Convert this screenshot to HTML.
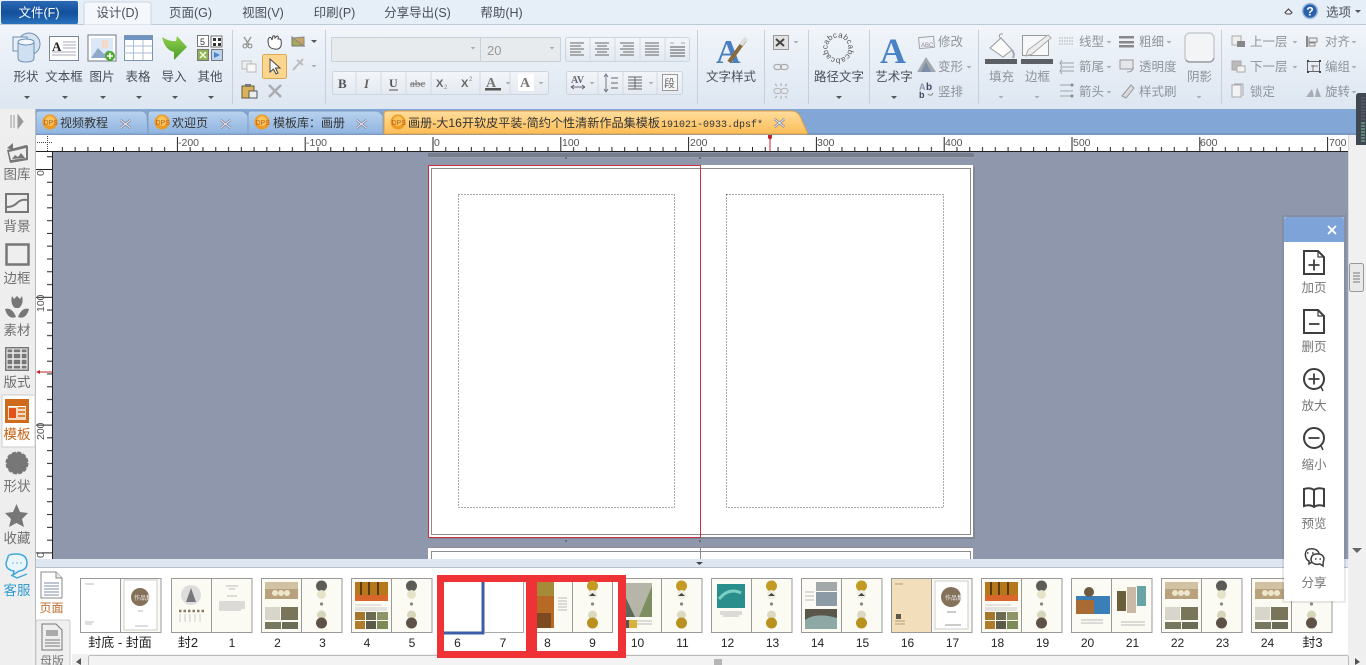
<!DOCTYPE html>
<html><head><meta charset="utf-8"><style>
html,body{margin:0;padding:0;width:1366px;height:665px;overflow:hidden;background:#eee}
svg{display:block;font-family:"Liberation Sans","Noto Sans CJK SC",sans-serif;filter:blur(.3px)}
text{font-size:12.5px;fill:#4a4f58}
.g text,text.g{fill:#8f949b}
.r{font-size:10.5px;fill:#555}
.s text{font-size:13.5px;fill:#707070;text-anchor:middle}
.p text{font-size:12.5px;fill:#777;text-anchor:middle}
.n text{font-size:12px;fill:#222;text-anchor:middle}
.m text{text-anchor:middle}
.tb{font-size:12px;fill:#333}
</style></head><body>
<svg width="1366" height="665" viewBox="0 0 1366 665" xmlns="http://www.w3.org/2000/svg">
<defs>
<linearGradient id="rib" x1="0" y1="0" x2="0" y2="1"><stop offset="0" stop-color="#f1f5fa"/><stop offset="1" stop-color="#dde6f1"/></linearGradient>
<linearGradient id="file" x1="0" y1="0" x2="0" y2="1"><stop offset="0" stop-color="#2c6ab4"/><stop offset=".5" stop-color="#134f9b"/><stop offset="1" stop-color="#2a72bd"/></linearGradient>
<linearGradient id="tabb" x1="0" y1="0" x2="0" y2="1"><stop offset="0" stop-color="#b8d2ee"/><stop offset="1" stop-color="#8fb4e0"/></linearGradient>
<linearGradient id="tabo" x1="0" y1="0" x2="0" y2="1"><stop offset="0" stop-color="#ffdd9c"/><stop offset="1" stop-color="#fbbd57"/></linearGradient>
<linearGradient id="btn" x1="0" y1="0" x2="0" y2="1"><stop offset="0" stop-color="#f3f6fa"/><stop offset="1" stop-color="#e3e9f0"/></linearGradient>
<linearGradient id="grn" x1="0" y1="0" x2="0" y2="1"><stop offset="0" stop-color="#8fd04e"/><stop offset="1" stop-color="#4a9a26"/></linearGradient>
<pattern id="hr" x="432.5" y="137" width="127.8" height="15" patternUnits="userSpaceOnUse">
<path d="M.5 0V15M13.28 10V15M26.06 10V15M38.84 10V15M51.62 10V15M64.4 10V15M77.18 10V15M89.96 10V15M102.74 10V15M115.52 10V15" stroke="#222" fill="none"/>
</pattern>
<pattern id="vr" x="36" y="169" width="16" height="127.8" patternUnits="userSpaceOnUse">
<path d="M0 .5H16M11 13.28H16M11 26.06H16M11 38.84H16M11 51.62H16M11 64.4H16M11 77.18H16M11 89.96H16M11 102.74H16M11 115.52H16" stroke="#222" fill="none"/>
</pattern>
<path id="circ" d="M838 37.500A10.500 10.500 0 1 1 837.900 37.500"/>
<g id="dps"><circle cx="0" cy="0" r="7.5" fill="#ef9a22"/><circle cx="0" cy="-1" r="5" fill="#f9c35e"/><text x="-6.5" y="3" style="font-size:7px;fill:#b5651d">DPS</text></g>
<g id="x"><path d="M-5 -4L5 4M-5 4L5 -4" stroke="#778" stroke-width="2.4"/><path d="M-5 -4L5 4M-5 4L5 -4" stroke="#eef" stroke-width="1"/></g>
<path id="ar" d="M-3 0H3L0 3Z" fill="#555"/>
<path id="arg" d="M-2.5 0H2.5L0 2.5Z" fill="#a9aeb5"/>
<g id="frame"><rect x=".5" y=".5" width="80.500" height="54" fill="#fbfaf3" stroke="#999"/><path d="M40.5 0V54" stroke="#999"/></g>
<g id="rd"><circle cx="60.5" cy="8" r="5.500" fill="#5c5c56"/><circle cx="60.5" cy="16.500" r="4.500" fill="#e5e3c8"/><circle cx="60.5" cy="26" r="1.6" fill="#888"/><circle cx="60.5" cy="37" r="4.500" fill="#d8d6b8"/><circle cx="60.5" cy="45" r="5.500" fill="#5d5148"/></g>
<g id="rg"><circle cx="60.5" cy="8" r="5.500" fill="#c39a24"/><circle cx="60.5" cy="16.500" r="4.500" fill="#efece0"/><path d="M57 18l3.500-3 3.500 3z" fill="#444"/><circle cx="60.5" cy="26" r="1.600" fill="#888"/><circle cx="60.5" cy="37" r="4.500" fill="#ddd9c0"/><circle cx="60.5" cy="45" r="5.500" fill="#b8911f"/></g>
<g id="lhouse"><rect x="4" y="4" width="33" height="17" fill="#b7a27d"/><rect x="4" y="4" width="33" height="7" fill="#d2c2a4"/><circle cx="14" cy="15" r="3" fill="#eee6cc"/><circle cx="20" cy="15" r="3" fill="#eee6cc"/><circle cx="26" cy="15" r="3" fill="#eee6cc"/><rect x="4" y="29" width="15" height="13" fill="#d8d6ca"/><rect x="20" y="29" width="17" height="13" fill="#79755b"/><rect x="4" y="44" width="16" height="7" fill="#77785f"/><rect x="21" y="44" width="16" height="7" fill="#6b6c55"/></g>
<g id="lorange"><rect x="4" y="4" width="33" height="19" fill="#b5781c"/><rect x="4" y="17" width="33" height="6" fill="#d9662a"/><path d="M10 4V17M18 4V17M27 4V17" stroke="#5c3a10" stroke-width="2"/><path d="M4 27H30M4 30H36M4 32H36" stroke="#ccc"/><rect x="4" y="34" width="10" height="8" fill="#a5772c"/><rect x="15" y="34" width="10" height="8" fill="#6c6a50"/><rect x="26" y="34" width="11" height="8" fill="#8d9468"/><rect x="4" y="43" width="10" height="8" fill="#b07c2a"/><rect x="15" y="43" width="10" height="8" fill="#5c5a48"/><rect x="26" y="43" width="11" height="8" fill="#7c8a58"/></g>
</defs>

<!-- base -->
<rect width="1366" height="665" fill="#efefef"/>
<rect width="1366" height="25" fill="#e6eef7"/>
<rect y="24" width="1366" height="1" fill="#bcc8d6"/>
<rect x="1" y="1" width="77" height="23" rx="2" fill="url(#file)"/>
<path d="M84 25V5Q84 2 87 2H148Q151 2 151 5V25Z" fill="#f4f7fb" stroke="#cdd6e0"/>
<g class="m">
<text x="39" y="17" style="fill:#fff;text-anchor:middle">文件(F)</text>
<text x="117.500" y="17">设计(D)</text>
<text x="190.500" y="17">页面(G)</text>
<text x="263" y="17">视图(V)</text>
<text x="334.500" y="17">印刷(P)</text>
<text x="417.500" y="17">分享导出(S)</text>
<text x="501.500" y="17">帮助(H)</text>
</g>
<path d="M1285 12.500l3.500-3.500 3.500 3.500-1.500 1.500h-4z" fill="none" stroke="#444" stroke-width="1.100"/>
<circle cx="1310" cy="11" r="7.500" fill="#2b62ad" stroke="#a8c0dc" stroke-width="1.500"/>
<text x="1310" y="15.500" style="fill:#fff;font-size:12px;font-weight:700;text-anchor:middle">?</text>
<text x="1326" y="16.500">选项</text><use href="#ar" x="1358" y="10"/>

<!-- ribbon -->
<rect y="25" width="1366" height="84" fill="url(#rib)"/>
<path d="M232.500 30V104M325.500 30V104M697.500 30V104M764.500 30V104M808.500 30V104M869.500 30V104M978.500 30V104M1221.500 30V104" stroke="#c6d0dc"/>

<g class="m">
<text x="26" y="81">形状</text><text x="64" y="81">文本框</text><text x="102" y="81">图片</text><text x="138" y="81">表格</text><text x="174" y="81">导入</text><text x="210" y="81">其他</text>
<text x="731" y="81">文字样式</text><text x="839" y="81">路径文字</text><text x="894" y="81">艺术字</text>
</g>
<use href="#ar" x="27" y="96"/><use href="#ar" x="65" y="96"/><use href="#ar" x="103" y="96"/><use href="#ar" x="139" y="96"/><use href="#ar" x="175" y="96"/><use href="#ar" x="211" y="96"/><use href="#ar" x="839" y="96"/><use href="#ar" x="894" y="96"/>

<!-- shape icon -->
<circle cx="29" cy="44" r="11" fill="#d6e5f4" stroke="#6f8fb0"/><rect x="13" y="37" width="14" height="14" fill="#e8eff7" stroke="#6f8fb0"/>
<path d="M18 42V58Q18 62 26 62Q34 62 34 58V42Z" fill="#cfe0f2" stroke="#6f8fb0"/><ellipse cx="26" cy="42" rx="8" ry="3" fill="#f3f8fd" stroke="#6f8fb0"/>
<!-- textbox -->
<rect x="49.500" y="36.500" width="29" height="24" fill="#fff" stroke="#7a8796"/><text x="52" y="51" style="font:700 13px 'Liberation Serif';fill:#222">A</text>
<path d="M63 42H76M63 45H76M63 48H76M52 52H76M52 55H76" stroke="#aab"/>
<!-- image -->
<rect x="88" y="35" width="28" height="26" fill="#fff" stroke="#6d7a88"/><rect x="91" y="38" width="22" height="20" fill="#dbe8f7"/><rect x="102" y="40" width="6" height="8" fill="#f5d9c8"/><path d="M91 58L98 48L104 54L108 50L113 58Z" fill="#8ea9c9"/>
<circle cx="110" cy="56" r="5" fill="#4da92f"/><path d="M110 53V59M107 56H113" stroke="#fff" stroke-width="1.600"/>
<!-- table -->
<rect x="124.500" y="35.500" width="28" height="25" fill="#fff" stroke="#7b95b3"/><rect x="125" y="36" width="27" height="4" fill="#6f93bf"/><path d="M124 46H152M124 53H152M133.500 40V60M143 40V60" stroke="#a9bed6"/>
<!-- import -->
<path d="M162 37Q170 42 176 41L177 36L187 47L174 60L174 52Q165 50 162 37Z" fill="url(#grn)"/>
<!-- other -->
<rect x="197.500" y="35.500" width="11" height="11" fill="#fff" stroke="#777"/><text x="200" y="45" style="font-size:9px;fill:#333">5</text>
<path d="M211 36h11v11h-11z" fill="#fff" stroke="#777"/><path d="M213 38h3v3h-3zM218 38h3v3h-3zM213 43h3v3h-3zM218 43h3v3h-3z" fill="#333"/>
<rect x="197.500" y="49.500" width="11" height="11" fill="#8db25a" stroke="#777"/><path d="M200 52l6 6M206 52l-6 6" stroke="#ffd" stroke-width="1.500"/>
<rect x="211.500" y="49.500" width="11" height="11" fill="#bcd5ef" stroke="#777"/><path d="M214 52l6 3-6 3z" fill="#4c84c4"/>

<!-- clipboard group -->
<path d="M244 37l5 8M251 37l-5 8" stroke="#999" stroke-width="1.500"/><circle cx="245" cy="46" r="2" fill="none" stroke="#888"/><circle cx="250" cy="46" r="2" fill="none" stroke="#888"/>
<path d="M269 46Q267 40 269 38Q271 36 272 40L273 36Q275 35 275 38L277 36Q279 36 278 39L280 39Q282 40 281 46Q279 50 275 49Q271 49 269 46Z" fill="#fff" stroke="#444"/>
<path d="M292 37L304 46H292Z" fill="#a7a85a" stroke="#777"/><path d="M293 38L304 37L304 46Z" fill="#c9a468" stroke="#888"/><use href="#ar" x="314" y="40"/>
<rect x="242" y="61" width="9" height="8" fill="#eee" stroke="#bbb"/><rect x="247" y="64" width="9" height="8" fill="#f8f8f8" stroke="#bbb"/>
<rect x="262.500" y="54.500" width="24" height="24" rx="2" fill="#fcd58e" stroke="#dba84f"/>
<path d="M270 59L270 72L273.500 69L276 74L278 73L275.500 68L280 68Z" fill="#fff" stroke="#444"/>
<path d="M293 70L303 59M297 60L303 65" stroke="#bbb" stroke-width="2"/><use href="#arg" x="314" y="65"/>
<rect x="242" y="86" width="12" height="12" fill="#d9b25a" stroke="#6a5a3a"/><rect x="245" y="84" width="6" height="3" fill="#777"/><rect x="249" y="91" width="8" height="7" fill="#eee" stroke="#555"/>
<path d="M269 85L281 97M281 85L269 97" stroke="#a9adb3" stroke-width="2.500"/>

<!-- font boxes -->
<rect x="331.500" y="37.500" width="149" height="24" rx="1" fill="#e8ebee" stroke="#c8d0da"/><rect x="480.500" y="37.500" width="80" height="24" rx="1" fill="#e8ebee" stroke="#c8d0da"/>
<use href="#arg" x="473" y="47"/><use href="#arg" x="552" y="47"/>
<text x="487" y="55" style="font-size:13px;fill:#999">20</text>
<rect x="332.500" y="71.500" width="216" height="23" rx="2" fill="url(#btn)" stroke="#ccd5df"/>
<path d="M356 72V94M381 72V94M406 72V94M431 72V94M480 72V94M510 72V94" stroke="#d3dae3"/>
<text x="338" y="88" style="font:700 13px 'Liberation Serif';fill:#555">B</text>
<text x="364" y="88" style="font:italic 700 13px 'Liberation Serif';fill:#666">I</text>
<text x="389" y="87" style="font:700 12px 'Liberation Serif';fill:#555">U</text><path d="M389 90H398" stroke="#555"/>
<text x="410" y="87" style="font:11px 'Liberation Serif';fill:#777;text-decoration:line-through">abc</text>
<text x="436" y="87" style="font:700 11px 'Liberation Sans';fill:#666">X</text><text x="444" y="89" style="font-size:6px;fill:#888">2</text>
<text x="461" y="87" style="font:700 11px 'Liberation Sans';fill:#666">X</text><text x="469" y="81" style="font-size:6px;fill:#888">2</text>
<text x="486" y="87" style="font:700 14px 'Liberation Serif';fill:#777">A</text><rect x="485" y="88" width="16" height="2.500" fill="#555"/><use href="#arg" x="508" y="82"/>
<rect x="518" y="74" width="16" height="17" fill="#fff"/><text x="520" y="87" style="font:700 14px 'Liberation Serif';fill:#777">A</text><use href="#arg" x="541" y="82"/>

<rect x="565.500" y="37.500" width="124" height="24" rx="2" fill="url(#btn)" stroke="#ccd5df"/>
<path d="M590 38V61M615 38V61M640 38V61M665 38V61" stroke="#d3dae3"/>
<path d="M570 43H584M570 46H581M570 49H584M570 52H581M570 55H584M595 43H609M597 46H607M595 49H609M597 52H607M595 55H609M620 43H634M623 46H634M620 49H634M623 52H634M620 55H634M645 43H659M645 46H659M645 49H659M645 52H659M645 55H659" stroke="#666"/>
<path d="M670 47H685M670 50H685M670 53H685M670 56H685" stroke="#555"/><path d="M670 43h4M681 43h4" stroke="#aaa"/>

<rect x="566.500" y="71.500" width="116" height="23" rx="2" fill="url(#btn)" stroke="#ccd5df"/>
<path d="M598 72V94M623 72V94M657 72V94" stroke="#d3dae3"/>
<text x="571" y="83" style="font:700 10px 'Liberation Serif';fill:#667">AV</text><path d="M571 87H585M571 87l3-2M571 87l3 2M585 87l-3-2M585 87l-3 2" stroke="#667" fill="none"/><use href="#arg" x="592" y="82"/>
<path d="M606 75V91M604 77l2-3 2 3M604 89l2 3 2-3" stroke="#778" fill="none"/><path d="M611 78H618M611 83H618M611 88H618" stroke="#666"/>
<path d="M628 77H642M628 80H642M628 83H642M628 86H642M628 89H642M635 77V89" stroke="#666"/><use href="#arg" x="651" y="82"/>
<rect x="662.500" y="74.500" width="15" height="16" fill="#f6f7f9" stroke="#999"/><text x="664" y="87" style="font-size:11px;fill:#666">段</text>

<!-- text style A -->
<text x="716" y="63" style="font:700 34px 'Liberation Serif';fill:#4a7fc0">A</text>
<path d="M729 62L745 40" stroke="#8a6a38" stroke-width="4"/><path d="M741 45L746 38" stroke="#ddd" stroke-width="4"/>
<rect x="773.500" y="35.500" width="15" height="14" fill="#e2e2e2" stroke="#999"/><path d="M776 39l8 7M784 39l-8 7" stroke="#444" stroke-width="2"/><use href="#arg" x="796" y="41"/>
<rect x="774" y="64.500" width="7.500" height="5" rx="2.500" fill="none" stroke="#aaa" stroke-width="1.200"/><rect x="780.500" y="64.500" width="7.500" height="5" rx="2.500" fill="none" stroke="#aaa" stroke-width="1.200"/>
<rect x="774" y="88.500" width="7" height="5" rx="2.500" fill="none" stroke="#bbb" stroke-width="1.200"/><rect x="781" y="88.500" width="7" height="5" rx="2.500" fill="none" stroke="#bbb" stroke-width="1.200"/><path d="M781 83V86M781 96V99M775 84L777 86M787 84L785 86M775 98L777 96M787 98L785 96" stroke="#aaa"/>

<!-- path text -->
<text style="font-size:8px;fill:#555"><textPath href="#circ">abcabcabcabcabc</textPath></text>
<!-- wordart -->
<text x="880" y="63" style="font:700 36px 'Liberation Serif';fill:#4a82c6">A</text>

<!-- right ribbon -->
<rect x="919" y="37" width="15" height="11" fill="#f0f2f5" stroke="#a0a6ae" transform="rotate(-5 926 42)"/><text x="921" y="47" style="font-size:6px;fill:#889">ABC</text>
<path d="M926 57L917 72H936Z" fill="#a2a8b0"/><path d="M926 62L921 72H931Z" fill="#7d8fa8"/>
<text x="919" y="90" style="font:700 9px 'Liberation Sans';fill:#8899aa">A</text><text x="926" y="90" style="font:700 10px 'Liberation Sans';fill:#446">b</text><text x="919" y="98" style="font:700 9px 'Liberation Sans';fill:#446">b</text><path d="M928 94q3 3 5-1" stroke="#888" fill="none"/>
<g class="g"><text x="938" y="46">修改</text><text x="938" y="71">变形</text><text x="938" y="96">竖排</text>
<text x="1079" y="46">线型</text><text x="1139" y="46">粗细</text><text x="1079" y="71">箭尾</text><text x="1139" y="71">透明度</text><text x="1079" y="96">箭头</text><text x="1139" y="96">样式刷</text>
<text x="989" y="81">填充</text><text x="1025" y="81">边框</text><text x="1187" y="81">阴影</text>
<text x="1250" y="46">上一层</text><text x="1250" y="71">下一层</text><text x="1250" y="96">锁定</text>
<text x="1325" y="46">对齐</text><text x="1325" y="71">编组</text><text x="1325" y="96">旋转</text></g>
<use href="#arg" x="969" y="66"/>
<use href="#arg" x="1109" y="41"/><use href="#arg" x="1169" y="41"/><use href="#arg" x="1109" y="66"/><use href="#arg" x="1109" y="91"/>
<use href="#arg" x="1295" y="41"/><use href="#arg" x="1295" y="66"/><use href="#arg" x="1354" y="41"/><use href="#arg" x="1354" y="66"/><use href="#arg" x="1354" y="91"/>
<use href="#arg" x="1001" y="96"/><use href="#arg" x="1037" y="96"/><use href="#arg" x="1199" y="96"/>
<!-- fill bucket -->
<path d="M990 48L1001 38L1012 50L1003 57Z" fill="#fbfbfb" stroke="#999"/><path d="M1000 38Q998 33 1003 34" stroke="#999" fill="none"/><path d="M1012 50Q1015 54 1013 58" stroke="#aaa" stroke-width="2" fill="none"/>
<rect x="985" y="59" width="32" height="5" fill="#5c5f66"/>
<!-- pen -->
<rect x="1022.500" y="35.500" width="26" height="20" fill="#f6f8fa" stroke="#999"/><path d="M1026 56L1028 50L1048 35L1051 38L1032 54Z" fill="#eee" stroke="#aaa"/>
<rect x="1021" y="59" width="32" height="5" fill="#5c5f66"/>
<!-- line icons -->
<path d="M1059 38H1074M1059 41H1074M1059 44H1074" stroke="#aaa" stroke-dasharray="1.500 1"/>
<rect x="1119" y="36" width="15" height="2.500" fill="#888"/><rect x="1119" y="41" width="15" height="2.500" fill="#888"/><rect x="1119" y="45" width="15" height="2.500" fill="#888"/>
<path d="M1060 63H1074M1060 67H1074M1060 71H1074M1062 60L1060 63L1062 66M1062 68L1060 71L1062 74" stroke="#a0a4aa" fill="none"/>
<rect x="1120" y="60" width="13" height="9" fill="#e4e6ea" stroke="#999"/><path d="M1127 72q7 0 6-6" stroke="#999" fill="none"/>
<path d="M1060 85H1073M1060 91H1073M1060 96H1073" stroke="#a0a4aa"/><circle cx="1072" cy="85" r="1.500" fill="#888"/><circle cx="1072" cy="96" r="1.500" fill="#888"/>
<path d="M1122 96L1131 85L1134 88L1126 98Z" fill="#d9dcdf" stroke="#999"/>
<rect x="1185" y="33" width="29" height="29" rx="5" fill="#f3f4f6" stroke="#c6cbd2" stroke-width="1.500"/><path d="M1186 60Q1187 62 1190 62H1209Q1213 62 1214 58" stroke="#9aa0a8" stroke-width="1.500" fill="none"/>
<!-- arrange icons -->
<rect x="1232" y="36" width="9" height="9" fill="#eee" stroke="#aaa"/><rect x="1237" y="41" width="8" height="6" fill="#888"/>
<rect x="1232" y="61" width="9" height="9" fill="#bbb" stroke="#aaa"/><rect x="1237" y="66" width="8" height="6" fill="#f3f3f3" stroke="#aaa"/>
<rect x="1232" y="85" width="9" height="12" fill="#f1f3f5" stroke="#aaa"/><path d="M1234 84H1243V96" stroke="#aaa" fill="none"/>
<path d="M1307 36V47" stroke="#666" stroke-width="1.500"/><path d="M1309 38H1317V42H1309ZM1309 43H1315V46H1309Z" fill="#eee" stroke="#888"/>
<rect x="1307.500" y="61.500" width="12" height="10" fill="none" stroke="#666"/><path d="M1307 60h2v2h-2zM1319 60h2v2h-2zM1307 71h2v2h-2zM1319 71h2v2h-2z" fill="#444"/><path d="M1313 65v6M1311 66h7" stroke="#777"/>
<path d="M1306 97L1312 89L1314 97ZM1315 97L1317 87L1321 97Z" fill="#a9adb3"/>

<!-- tab strip -->
<rect y="109" width="1366" height="26" fill="#efefef"/>
<rect x="35" y="109" width="1331" height="26" fill="#82a6d6"/>
<rect x="35" y="133" width="1331" height="2" fill="#7798c5"/>
<path d="M11 115V128M14 115V128M18 115L23 121.500L18 128Z" stroke="#999" fill="#999"/>
<path d="M36 134V114Q36 111 39 111H141Q145 111 147 115L148 134Z" fill="url(#tabb)" stroke="#7e9cc4"/>
<path d="M148 134V114Q148 111 151 111H241Q245 111 248 116V134Z" fill="url(#tabb)" stroke="#7e9cc4"/>
<path d="M248 134V114Q248 111 251 111H376Q380 111 383 116V134Z" fill="url(#tabb)" stroke="#7e9cc4"/>
<path d="M384 134V114Q384 111 387 111H792Q797 111 800 116L808 134Z" fill="url(#tabo)" stroke="#d99e43"/>
<use href="#dps" x="50" y="122"/><use href="#dps" x="162" y="122"/><use href="#dps" x="262" y="122"/><use href="#dps" x="398" y="122"/>
<text class="tb" x="60" y="127">视频教程</text><text class="tb" x="172" y="127">欢迎页</text><text class="tb" x="273" y="127">模板库：画册</text>
<text class="tb" x="408" y="127" textLength="252" lengthAdjust="spacingAndGlyphs">画册-大16开软皮平装-简约个性清新作品集模板</text>
<text x="661" y="127" style="font:10px 'Liberation Mono';fill:#333">191021-0933.dpsf*</text>
<use href="#x" x="125.500" y="124"/><use href="#x" x="225.500" y="124"/><use href="#x" x="361.500" y="124"/><use href="#x" x="779.500" y="123"/>

<!-- canvas -->
<rect x="52" y="152" width="1296" height="407" fill="#8e97ac"/>
<rect x="428" y="153" width="546" height="4" fill="#757c8c"/>
<rect x="428" y="157" width="546" height="1" fill="#979fb0"/>
<path d="M566 157v2M700 157v2" stroke="#444"/>
<rect x="973" y="167" width="2" height="372" fill="#7f8798"/>
<rect x="430" y="537" width="545" height="2" fill="#7f8798"/>
<rect x="428" y="165" width="545" height="372" fill="#fff"/>
<rect x="431.500" y="168.500" width="539" height="366" fill="none" stroke="#8c8c8c"/>
<rect x="428.500" y="165.500" width="272" height="372" fill="none" stroke="#c9313f"/>
<rect x="458.500" y="194.500" width="216" height="313" fill="none" stroke="#555" stroke-dasharray="1 2"/>
<rect x="726.500" y="194.500" width="217" height="313" fill="none" stroke="#555" stroke-dasharray="1 2"/>
<path d="M566 540v2M700 540v2" stroke="#444"/>
<rect x="428" y="547" width="545" height="12" fill="#fff"/>
<path d="M428 547.500H973M431.500 552V559M970.500 552V559M431 551.500H971M700.500 547V559" stroke="#8c8c8c"/>

<!-- rulers -->
<rect x="36" y="135" width="1312" height="17" fill="#fff"/>
<rect x="52" y="137" width="1296" height="15" fill="url(#hr)"/>
<rect x="36" y="151" width="1312" height="1" fill="#222"/>
<rect x="36" y="152" width="16" height="407" fill="#fff"/>
<rect x="36" y="152" width="16" height="407" fill="url(#vr)"/>
<rect x="52" y="152" width="1" height="407" fill="#222"/>
<path d="M37 142.500H52M47.500 136V151" stroke="#444" stroke-dasharray="1 1"/>
<g>
<text class="r" x="178" y="146">-200</text><text class="r" x="306" y="146">-100</text><text class="r" x="434" y="146">0</text><text class="r" x="562" y="146">100</text><text class="r" x="690" y="146">200</text><text class="r" x="817" y="146">300</text><text class="r" x="945" y="146">400</text><text class="r" x="1073" y="146">500</text><text class="r" x="1200" y="146">600</text><text class="r" x="1329" y="146">700</text></g>
<path d="M770 136v15" stroke="#c0272d"/><path d="M768 135h4v3l-2 2-2-2z" fill="#c0272d"/>
<path d="M37 372H52" stroke="#c0272d"/><path d="M36 372l4-2v4z" fill="#c0272d"/>
<text class="r" transform="translate(44 176) rotate(-90)">0</text><text class="r" transform="translate(44 312) rotate(-90)">100</text><text class="r" transform="translate(44 440) rotate(-90)">200</text><text class="r" transform="translate(44 558) rotate(-90)">0</text>
<rect x="36" y="559" width="17" height="1" fill="#bbb"/>

<!-- left sidebar -->
<rect x="0" y="135" width="35" height="430" fill="#eeeeee"/>
<rect x="35" y="109" width="1" height="556" fill="#b8bcc2"/>
<rect x="2" y="395" width="33" height="52" fill="#fff" stroke="#ccc"/>
<g fill="#777">
<path d="M7 150L26 145Q28 145 28 147V160L10 163Z"/><path d="M9 152L26 148V158L11 160Z" fill="#eee"/><path d="M12 159L15 155L18 157L21 153L25 158Z"/><path d="M7 148L13 143L13 150Z"/>
<rect x="6" y="194" width="22" height="18" fill="none" stroke="#777" stroke-width="2"/><path d="M7 207Q13 207 17 203T27 200" stroke="#777" stroke-width="2" fill="none"/>
<rect x="6.500" y="244.500" width="22" height="20" fill="none" stroke="#777" stroke-width="2.500"/>
<path d="M12 296L14 299L17 296L20 299L22 296Q24 304 19 308H15Q10 304 12 296Z"/><path d="M5 309Q12 307 16 317Q8 320 5 309ZM29 309Q22 307 18 317Q26 320 29 309Z"/>
<rect x="5" y="347" width="24" height="24"/><path d="M7 353H27M7 359H27M7 365H27M13 349V369M21 349V369" stroke="#eee" stroke-width="1.500"/>
<rect x="7" y="349" width="20" height="20" fill="none" stroke="#eee" stroke-width="1"/>
<circle cx="17" cy="463" r="10.500" stroke="#777" stroke-width="2" stroke-dasharray="4 1.500"/>
<path d="M16.500 504L20 512L28 513L22 519L24 527L16.500 523L9 527L11 519L5 513L13 512Z"/>
</g>
<rect x="5" y="399" width="24" height="24" fill="#cf6a1d"/><rect x="8" y="402" width="18" height="18" fill="#f6d9bd"/><rect x="8" y="402" width="18" height="4" fill="#cf6a1d"/><rect x="9" y="408" width="7" height="10" fill="#e2511a"/><path d="M18 408H25M18 412H25M18 416H25" stroke="#cf6a1d" stroke-width="1.500"/><rect x="8" y="406" width="18" height="1" fill="#fff"/>
<path d="M8 557Q8 554 16 554Q27 554 27 563Q27 570 19 571L13 575L14 571Q6 570 6 563Z" fill="#eaf6fb" stroke="#3fa8da" stroke-width="1.500"/><path d="M11 575L17 578L27 574" stroke="#3fa8da" stroke-width="1.300" fill="none"/>
<path d="M12.500 563h1M16.500 563h1M20.500 563h1" stroke="#3fa8da" stroke-width="1.500"/>
<g class="s"><text x="17" y="179">图库</text><text x="17" y="231">背景</text><text x="17" y="283">边框</text><text x="17" y="335">素材</text><text x="17" y="387">版式</text>
<text x="17" y="439" style="fill:#c45f14">模板</text><text x="17" y="491">形状</text><text x="17" y="543">收藏</text><text x="17" y="595" style="fill:#2f9bd0">客服</text></g>

<!-- bottom -->
<rect x="36" y="559" width="1312" height="9" fill="#dee6f1"/>
<rect x="36" y="567" width="1312" height="1" fill="#b8bfc8"/>
<path d="M696 562h7l-3.500 3z" fill="#444"/>
<rect x="36" y="568" width="1312" height="97" fill="#fff"/>
<path d="M41 572H56L62 578V598H41Z" fill="#fff" stroke="#888"/><path d="M56 572V578H62" fill="#eee" stroke="#888"/><path d="M44 583H59M44 586H59M44 589H59M44 592H59M44 595H59" stroke="#7c8ea8"/>
<text x="39.500" y="612" style="font-size:12px;fill:#c0692a">页面</text>
<path d="M36 665V622Q36 620 38 620H68Q70 620 70 622V665" fill="#efefef" stroke="#ccc"/>
<path d="M42 624H56L62 630V650H42Z" fill="#eee" stroke="#777"/><rect x="46" y="630" width="12" height="6" fill="#aaa"/><path d="M45 640H60M45 643H60M45 646H60" stroke="#777"/>
<text x="40" y="665" style="font-size:12px;fill:#777">母版</text>
<rect x="72" y="654" width="1294" height="11" fill="#f0f0f0"/>
<rect x="88.500" y="655.500" width="1260" height="11" rx="2" fill="#f3f3f3" stroke="#bbb"/>
<path d="M81 658L76 662L81 665Z" fill="#555"/><path d="M1355 658L1360 662L1355 665Z" fill="#555"/>
<path d="M715 659v6M717 659v6M719 659v6M721 659v6" stroke="#777"/>

<!-- thumbs -->
<g>
<g transform="translate(80 578)"><use href="#frame"/><rect x="1" y="1" width="39" height="53" fill="#fff"/><rect x="44" y="2" width="33" height="50" fill="#fff" stroke="#ccc"/><circle cx="60" cy="19" r="9" fill="#85715a"/><text x="54" y="22" style="font-size:6px;fill:#eee">作品集</text><path d="M5 6H14M5 44H14M5 46H12M58 33H63M55 48H68" stroke="#bbb"/></g>
<g transform="translate(171 578)"><use href="#frame"/><circle cx="20" cy="17" r="10" fill="#ddd"/><path d="M20 10L15 24H25Z" fill="#777"/><path d="M8 33H33" stroke="#8a7a66" stroke-width="2.500" stroke-dasharray="2.500 2"/><path d="M9 36V44M14 36V44M19 36V44M24 36V44M29 36V44" stroke="#ccc"/><path d="M55 8H67M58 11H64M56 18H66M48 24H74M48 26H74M48 28H74M48 30H74M48 32H70" stroke="#bbb"/></g>
<g transform="translate(261 578)"><use href="#frame"/><use href="#lhouse"/><use href="#rd"/></g>
<g transform="translate(351 578)"><use href="#frame"/><use href="#lorange"/><use href="#rd"/></g>
<g transform="translate(621 578)"><use href="#frame"/><rect x="4" y="5" width="27" height="34" fill="#b5b5a8"/><path d="M4 39V18L14 39Z" fill="#5d6a5a"/><path d="M18 39L31 8V39Z" fill="#7d8f60"/><rect x="4" y="42" width="10" height="8" fill="#555"/><rect x="8" y="42" width="8" height="8" fill="#d9b13d"/><path d="M16 43H31M16 46H31" stroke="#bbb"/><use href="#rg"/></g>
<g transform="translate(711 578)"><use href="#frame"/><rect x="6" y="6" width="28" height="24" fill="#2a8f8c"/><path d="M8 21Q18 9 30 15" stroke="#7ccfc3" stroke-width="3" fill="none"/><path d="M9 34H31M9 36H31M12 38H28" stroke="#bbb"/><use href="#rg"/></g>
<g transform="translate(801 578)"><use href="#frame"/><rect x="15" y="4" width="21" height="9" fill="#a3a8ab"/><rect x="15" y="14" width="21" height="14" fill="#8c9aa6"/><path d="M4 14H13M4 18H13M4 22H13" stroke="#bbb"/><rect x="4" y="31" width="32" height="20" fill="#5a564a"/><path d="M4 42Q15 34 36 40V51H4Z" fill="#8ea8a5"/><use href="#rg"/></g>
<g transform="translate(891 578)"><use href="#frame"/><rect x="1" y="1" width="39" height="53" fill="#f2deba"/><rect x="5" y="36" width="5" height="5" fill="#5a5a4a"/><path d="M4 43H14M4 46H14M4 6H12" stroke="#b39f7c"/><rect x="44" y="3" width="33" height="48" fill="#fff" stroke="#ccc"/><circle cx="60" cy="19" r="10" fill="#85715a"/><text x="54" y="22" style="font-size:6px;fill:#eee">作品集</text><path d="M56 34H65M54 47H70" stroke="#999"/></g>
<g transform="translate(981 578)"><use href="#frame"/><use href="#lorange"/><use href="#rd"/></g>
<g transform="translate(1071 578)"><use href="#frame"/><rect x="5" y="18" width="34" height="18" fill="#3a7fb8"/><rect x="5" y="22" width="18" height="14" fill="#a86b33"/><circle cx="18" cy="14" r="5" fill="#6c5a42"/><path d="M10 42H32M10 45H32" stroke="#bbb"/><rect x="46" y="13" width="9" height="20" fill="#6a5f3a"/><rect x="56" y="9" width="9" height="26" fill="#c9b9a6"/><rect x="66" y="8" width="9" height="20" fill="#6aa3a5"/><path d="M50 44H74M50 47H74" stroke="#bbb"/></g>
<g transform="translate(1161 578)"><use href="#frame"/><use href="#lhouse"/><use href="#rd"/></g>
<g transform="translate(1251 578)"><use href="#frame"/><use href="#lhouse"/><use href="#rd"/></g>
</g>

<!-- red boxes -->
<rect x="437" y="575" width="189" height="83" fill="#ef3236"/>
<rect x="444" y="582" width="82" height="69" fill="#fff"/>
<rect x="537" y="582" width="81" height="69" fill="#fff"/>
<path d="M483 582V633H444" fill="none" stroke="#3a5fa8" stroke-width="3"/>
<path d="M484.500 582V632M484 632.500H523M523.500 582V633" stroke="#aaa"/>
<g transform="translate(531 578)"><rect x="6" y="4" width="75" height="50" fill="#fbfaf3"/><path d="M6 54.500H81.500V4M41.500 4V54" stroke="#999" fill="none"/><rect x="6" y="4" width="17" height="46" fill="#b66a25"/><rect x="6" y="4" width="17" height="14" fill="#a58a3a"/><rect x="6" y="35" width="14" height="15" fill="#7d4a22"/><path d="M27 20H36M27 23H36M27 26H36M27 29H36M27 32H36" stroke="#bbb"/><use href="#rg" x="1"/></g>

<g class="n">
<text x="120" y="647" style="font-size:13px">封底 - 封面</text><text x="188" y="647" style="font-size:13px">封2</text><text x="232" y="647">1</text><text x="277.500" y="647">2</text><text x="322.500" y="647">3</text><text x="367" y="647">4</text><text x="412" y="647">5</text><text x="457.500" y="647">6</text><text x="503" y="647">7</text><text x="547.500" y="647">8</text><text x="592.500" y="647">9</text><text x="637.500" y="647">10</text><text x="682.500" y="647">11</text><text x="727.500" y="647">12</text><text x="772.500" y="647">13</text><text x="817.500" y="647">14</text><text x="862.500" y="647">15</text><text x="907.500" y="647">16</text><text x="952.500" y="647">17</text><text x="997.500" y="647">18</text><text x="1042.500" y="647">19</text><text x="1087.500" y="647">20</text><text x="1132.500" y="647">21</text><text x="1177.500" y="647">22</text><text x="1222.500" y="647">23</text><text x="1267.500" y="647">24</text><text x="1312.500" y="647" style="font-size:13px">封3</text>
</g>

<!-- right scrollbar -->
<rect x="1348" y="135" width="18" height="424" fill="#f0f0f0"/>
<rect x="1348" y="135" width="1" height="424" fill="#d8d8d8"/>
<rect x="1349.500" y="263.500" width="14" height="28" rx="2" fill="#e9e9e9" stroke="#999"/><path d="M1353 273H1360M1353 276H1360M1353 279H1360M1353 282H1360" stroke="#777"/>
<path d="M1352 548H1362L1357 553Z" fill="#666"/>
<path d="M1356 96Q1356 93 1359 93H1366V145H1356Z" fill="#3f4750"/><path d="M1361 98H1365M1361 101H1365M1361 104H1365M1361 107H1365M1361 110H1365M1361 113H1365M1361 116H1365M1361 119H1365" stroke="#667"/><path d="M1361 123H1365M1361 126H1365M1361 129H1365M1361 132H1365M1361 135H1365M1361 138H1365M1361 141H1365" stroke="#7fc7a0"/>

<!-- floating panel -->
<rect x="1282" y="215" width="64" height="388" fill="#555" opacity=".12"/>
<rect x="1284" y="217" width="60" height="384" rx="2" fill="#fff"/>
<path d="M1284 242V220Q1284 217 1287 217H1341Q1344 217 1344 220V242Z" fill="#7ea3d8"/>
<path d="M1328 226L1336 234M1336 226L1328 234" stroke="#fff" stroke-width="1.800"/>
<g fill="none" stroke="#3d3d3d" stroke-width="2">
<path d="M1304 251H1318L1324 257V274H1304Z"/><path d="M1318 251V257H1324" stroke-width="1.200"/><path d="M1308.500 265H1319.500M1314 259.500V270.500" stroke-width="1.800"/>
<path d="M1304 310H1318L1324 316V333H1304Z"/><path d="M1318 310V316H1324" stroke-width="1.200"/><path d="M1309 324H1319.500" stroke-width="1.800"/>
<circle cx="1314" cy="379" r="10"/><path d="M1321 387L1323 391" stroke-width="1.500"/><path d="M1308.500 379H1319.500M1314 373.500V384.500" stroke-width="1.800"/>
<circle cx="1314" cy="438" r="10"/><path d="M1321 446L1323 450" stroke-width="1.500"/><path d="M1308.500 438H1319.500" stroke-width="1.800"/>
<path d="M1304 489Q1310 487 1314 490Q1318 487 1324 489V506Q1318 504 1314 507Q1310 504 1304 506ZM1314 490V507"/>
<path d="M1310 549C1304 549 1304 559 1309 561L1309 564L1312 562" stroke-width="1.500"/><path d="M1310 549C1315 548 1319 551 1319 554" stroke-width="1.500"/>
<path d="M1316 554C1322 553 1325 557 1323.500 561C1323 562 1323 564 1323 566L1320 564C1316 565 1312 564 1311 560C1311 556 1313 554 1316 554Z" stroke-width="1.500"/>
</g>
<path d="M1307 553h1.500M1312 553h1.500M1315 559h1.500M1319.500 559h1.500" stroke="#3d3d3d" stroke-width="1.600"/>
<g class="p"><text x="1314" y="292">加页</text><text x="1314" y="351">删页</text><text x="1314" y="410">放大</text><text x="1314" y="469">缩小</text><text x="1314" y="528">预览</text><text x="1314" y="587">分享</text></g>
</svg>
</body></html>
